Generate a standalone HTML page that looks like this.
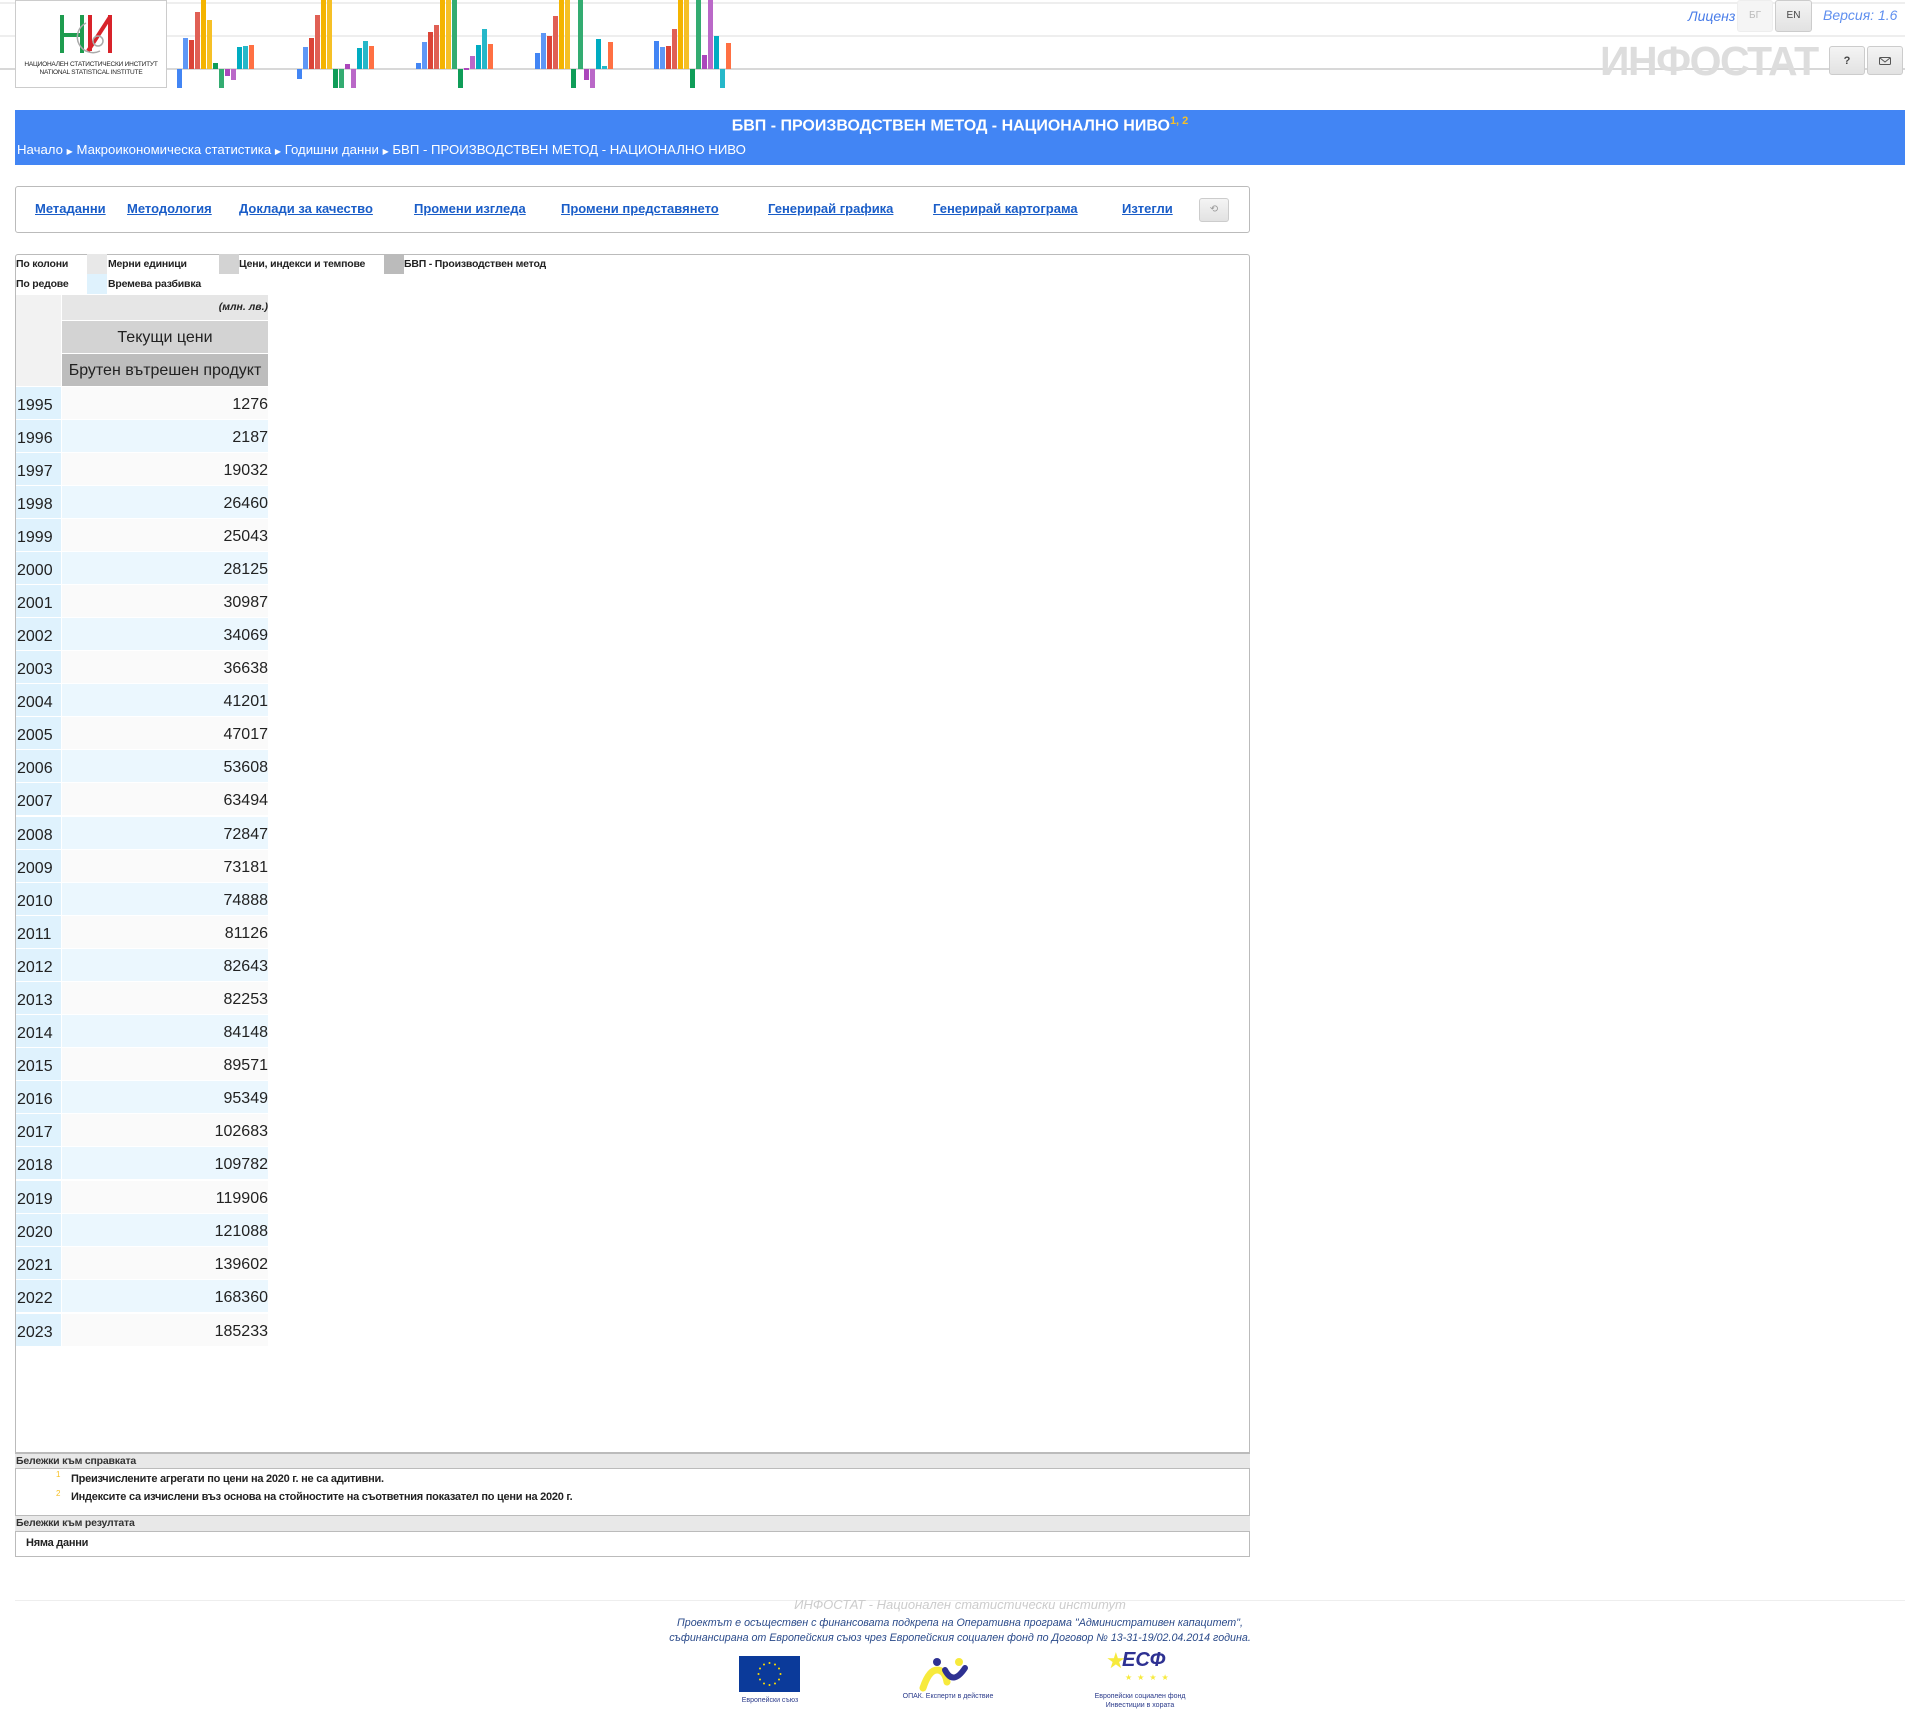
<!DOCTYPE html>
<html><head><meta charset="utf-8">
<style>
*{margin:0;padding:0;box-sizing:border-box}
body{width:1905px;height:1715px;position:relative;background:#fff;font-family:"Liberation Sans",sans-serif;overflow:hidden;color:#222}
.a{position:absolute}
.gl{position:absolute;left:0;width:1905px;height:2px;background:#eee}
.tb a{position:absolute;top:14px;color:#1a5dc8;font-weight:bold;font-size:13px;text-decoration:underline;white-space:nowrap}
.lg{position:absolute;font-size:10.5px;font-weight:bold;letter-spacing:-0.2px;white-space:nowrap}
.yr{position:absolute;left:16px;width:45px;height:32px;background:#dff2fd;font-size:16px;line-height:38px;padding-left:1px}
.dv{position:absolute;left:62px;width:206px;height:32px;font-size:16px;line-height:36px;text-align:right}
.btn{position:absolute;border:1px solid #ccc;border-radius:3px;background:linear-gradient(#f4f4f4,#e2e2e2);font-size:10px;color:#444;text-align:center}
.nt{position:absolute;font-size:11px;font-weight:bold;letter-spacing:-0.25px;white-space:nowrap}
</style></head><body>

<div class="gl" style="top:2px"></div>
<div class="gl" style="top:35px"></div>
<div class="a" style="left:0;top:68px;width:1905px;height:2px;background:#d8d8d8"></div>

<div class="a" style="left:15px;top:0;width:152px;height:88px;border:1px solid #ccc;background:#fff">
<svg class="a" style="left:44px;top:12px" width="60" height="45" viewBox="0 0 60 45">
<rect x="0" y="2" width="4" height="38" fill="#1e9c4f"/><rect x="0" y="20" width="22" height="4" fill="#1e9c4f"/><rect x="20" y="2" width="4" height="38" fill="#1e9c4f"/>
<path d="M28 38 L50 4" stroke="#d8232a" stroke-width="4"/><rect x="28" y="2" width="4" height="36" fill="#d8232a"/><rect x="48" y="2" width="4" height="38" fill="#d8232a"/>
<path d="M26 10 A14 14 0 1 0 40 38" fill="none" stroke="#aaa" stroke-width="1.5"/><circle cx="38" cy="28" r="5" fill="none" stroke="#aaa" stroke-width="1.5"/>
</svg>
<div class="a" style="left:0;top:60px;width:150px;text-align:center;font-size:6.5px;line-height:8px;color:#222;letter-spacing:-0.2px">НАЦИОНАЛЕН СТАТИСТИЧЕСКИ ИНСТИТУТ<br>NATIONAL STATISTICAL INSTITUTE</div>
</div>

<svg class="a" style="left:0;top:0" width="760" height="90">
<g>
<rect x="177" y="69" width="5" height="19" fill="#4285f4"/><rect x="183" y="38" width="5" height="31" fill="#5e97f6"/><rect x="189" y="40" width="5" height="29" fill="#db4437"/><rect x="195" y="12" width="5" height="57" fill="#e06055"/><rect x="201" y="0" width="5" height="69" fill="#f4b400"/><rect x="207" y="20" width="5" height="49" fill="#f6c026"/><rect x="213" y="63" width="5" height="6" fill="#0f9d58"/><rect x="219" y="69" width="5" height="19" fill="#33ac71"/><rect x="225" y="69" width="5" height="7" fill="#ab47bc"/><rect x="231" y="69" width="5" height="11" fill="#ba68c8"/><rect x="237" y="47" width="5" height="22" fill="#00acc1"/><rect x="243" y="46" width="5" height="23" fill="#26b8c9"/><rect x="249" y="45" width="5" height="24" fill="#ff7043"/>
</g><g>
<rect x="297" y="69" width="5" height="10" fill="#4285f4"/><rect x="303" y="47" width="5" height="22" fill="#5e97f6"/><rect x="309" y="38" width="5" height="31" fill="#db4437"/><rect x="315" y="15" width="5" height="54" fill="#e06055"/><rect x="321" y="0" width="5" height="69" fill="#f4b400"/><rect x="327" y="0" width="5" height="69" fill="#f6c026"/><rect x="333" y="69" width="5" height="19" fill="#0f9d58"/><rect x="339" y="69" width="5" height="19" fill="#33ac71"/><rect x="345" y="64" width="5" height="5" fill="#ab47bc"/><rect x="351" y="69" width="5" height="19" fill="#ba68c8"/><rect x="357" y="48" width="5" height="21" fill="#00acc1"/><rect x="363" y="41" width="5" height="28" fill="#26b8c9"/><rect x="369" y="46" width="5" height="23" fill="#ff7043"/>
</g><g>
<rect x="416" y="63" width="5" height="6" fill="#4285f4"/><rect x="422" y="42" width="5" height="27" fill="#5e97f6"/><rect x="428" y="32" width="5" height="37" fill="#db4437"/><rect x="434" y="25" width="5" height="44" fill="#e06055"/><rect x="440" y="0" width="5" height="69" fill="#f4b400"/><rect x="446" y="0" width="5" height="69" fill="#f6c026"/><rect x="452" y="0" width="5" height="69" fill="#33ac71"/><rect x="458" y="69" width="5" height="19" fill="#0f9d58"/><rect x="464" y="68" width="5" height="2" fill="#ab47bc"/><rect x="470" y="56" width="5" height="13" fill="#ba68c8"/><rect x="476" y="45" width="5" height="24" fill="#00acc1"/><rect x="482" y="29" width="5" height="40" fill="#26b8c9"/><rect x="488" y="44" width="5" height="25" fill="#ff7043"/>
</g><g>
<rect x="535" y="53" width="5" height="16" fill="#4285f4"/><rect x="541" y="33" width="5" height="36" fill="#5e97f6"/><rect x="547" y="36" width="5" height="33" fill="#db4437"/><rect x="553" y="16" width="5" height="53" fill="#e06055"/><rect x="559" y="0" width="5" height="69" fill="#f4b400"/><rect x="565" y="0" width="5" height="69" fill="#f6c026"/><rect x="571" y="69" width="5" height="19" fill="#0f9d58"/><rect x="578" y="0" width="5" height="69" fill="#33ac71"/><rect x="584" y="69" width="5" height="11" fill="#ab47bc"/><rect x="590" y="69" width="5" height="19" fill="#ba68c8"/><rect x="596" y="39" width="5" height="30" fill="#00acc1"/><rect x="602" y="66" width="5" height="3" fill="#26b8c9"/><rect x="608" y="42" width="5" height="27" fill="#ff7043"/>
</g><g>
<rect x="654" y="41" width="5" height="28" fill="#4285f4"/><rect x="660" y="47" width="5" height="22" fill="#5e97f6"/><rect x="666" y="46" width="5" height="23" fill="#db4437"/><rect x="672" y="29" width="5" height="40" fill="#e06055"/><rect x="678" y="0" width="5" height="69" fill="#f4b400"/><rect x="684" y="0" width="5" height="69" fill="#f6c026"/><rect x="690" y="69" width="5" height="19" fill="#0f9d58"/><rect x="696" y="0" width="5" height="69" fill="#33ac71"/><rect x="702" y="55" width="5" height="14" fill="#ab47bc"/><rect x="708" y="0" width="5" height="69" fill="#ba68c8"/><rect x="714" y="36" width="5" height="33" fill="#00acc1"/><rect x="720" y="69" width="5" height="19" fill="#26b8c9"/><rect x="726" y="43" width="5" height="26" fill="#ff7043"/>
</g>
</svg>

<div class="a" style="left:1688px;top:8px;font-size:14px;font-style:italic;color:#4a7de8">Лиценз</div>
<div class="btn" style="left:1737px;top:0;width:36px;height:32px;line-height:30px;color:#bbb;background:#f5f5f5;border-color:#eee">БГ</div>
<div class="btn" style="left:1775px;top:0;width:37px;height:32px;line-height:30px">EN</div>
<div class="a" style="left:1823px;top:7px;font-size:14px;font-style:italic;color:#5f8fef">Версия: 1.6</div>
<div class="a" style="left:1600px;top:38px;font-size:41px;font-weight:bold;color:#ddd;letter-spacing:-1.5px">ИНФОСТАТ</div>
<div class="btn" style="left:1829px;top:46px;width:36px;height:29px;line-height:28px;font-weight:bold;font-size:11px">?</div>
<div class="btn" style="left:1867px;top:46px;width:36px;height:29px">
<svg style="margin-top:9px" width="12" height="10" viewBox="0 0 12 10"><rect x="0.5" y="1.5" width="11" height="7" rx="1" fill="none" stroke="#555"/><path d="M1 2 L6 6 L11 2" fill="none" stroke="#555"/></svg></div>

<div class="a" style="left:15px;top:110px;width:1890px;height:55px;background:#4285f4;color:#fff">
<div class="a" style="left:0;top:5px;width:1890px;text-align:center;font-size:16px;font-weight:bold">БВП - ПРОИЗВОДСТВЕН МЕТОД - НАЦИОНАЛНО НИВО<sup style="color:#f6c026;font-size:11px">1, 2</sup></div>
<div class="a" style="left:2px;top:32px;font-size:13.2px;white-space:nowrap">Начало <span style="font-size:8px">▶</span> Макроикономическа статистика <span style="font-size:8px">▶</span> Годишни данни <span style="font-size:8px">▶</span> БВП - ПРОИЗВОДСТВЕН МЕТОД - НАЦИОНАЛНО НИВО</div>
</div>

<div class="a tb" style="left:15px;top:186px;width:1235px;height:47px;border:1px solid #bbb;border-radius:3px">
<a style="left:19px">Метаданни</a><a style="left:111px">Методология</a><a style="left:223px">Доклади за качество</a><a style="left:398px">Промени изгледа</a><a style="left:545px">Промени представянето</a><a style="left:752px">Генерирай графика</a><a style="left:917px">Генерирай картограма</a><a style="left:1106px">Изтегли</a>
<div class="btn" style="left:1183px;top:11px;width:30px;height:24px;line-height:22px;color:#999">⟲</div>
</div>

<div class="a" style="left:15px;top:254px;width:1235px;height:1199px;border:1px solid #bbb;border-radius:3px 3px 0 0"></div>
<div class="lg" style="left:16px;top:258px">По колони</div>
<div class="a" style="left:87px;top:254px;width:20px;height:20px;background:#e8e8e8"></div>
<div class="lg" style="left:108px;top:258px">Мерни единици</div>
<div class="a" style="left:219px;top:254px;width:20px;height:20px;background:#d3d3d3"></div>
<div class="lg" style="left:239px;top:258px">Цени, индекси и темпове</div>
<div class="a" style="left:384px;top:254px;width:20px;height:20px;background:#bbb"></div>
<div class="lg" style="left:404px;top:258px">БВП - Производствен метод</div>
<div class="lg" style="left:16px;top:278px">По редове</div>
<div class="a" style="left:87px;top:274px;width:20px;height:20px;background:#dff2fd"></div>
<div class="lg" style="left:108px;top:278px">Времева разбивка</div>

<div class="a" style="left:16px;top:295px;width:45px;height:91px;background:#f2f2f2"></div>
<div class="a" style="left:62px;top:295px;width:206px;height:25px;background:#e6e6e6;font-size:10.5px;font-weight:bold;font-style:italic;text-align:right;line-height:25px">(млн. лв.)</div>
<div class="a" style="left:62px;top:321px;width:206px;height:32px;background:#d3d3d3;font-size:16px;text-align:center;line-height:34px">Текущи цени</div>
<div class="a" style="left:62px;top:354px;width:206px;height:32px;background:#bdbdbd;font-size:16px;text-align:center;line-height:34px">Брутен вътрешен продукт</div>

<div class="yr" style="top:387px">1995</div><div class="dv" style="top:387px;background:#fafafa">1276</div>
<div class="yr" style="top:420px">1996</div><div class="dv" style="top:420px;background:#ebf7fe">2187</div>
<div class="yr" style="top:453px">1997</div><div class="dv" style="top:453px;background:#fafafa">19032</div>
<div class="yr" style="top:486px">1998</div><div class="dv" style="top:486px;background:#ebf7fe">26460</div>
<div class="yr" style="top:519px">1999</div><div class="dv" style="top:519px;background:#fafafa">25043</div>
<div class="yr" style="top:552px">2000</div><div class="dv" style="top:552px;background:#ebf7fe">28125</div>
<div class="yr" style="top:585px">2001</div><div class="dv" style="top:585px;background:#fafafa">30987</div>
<div class="yr" style="top:618px">2002</div><div class="dv" style="top:618px;background:#ebf7fe">34069</div>
<div class="yr" style="top:651px">2003</div><div class="dv" style="top:651px;background:#fafafa">36638</div>
<div class="yr" style="top:684px">2004</div><div class="dv" style="top:684px;background:#ebf7fe">41201</div>
<div class="yr" style="top:717px">2005</div><div class="dv" style="top:717px;background:#fafafa">47017</div>
<div class="yr" style="top:750px">2006</div><div class="dv" style="top:750px;background:#ebf7fe">53608</div>
<div class="yr" style="top:783px">2007</div><div class="dv" style="top:783px;background:#fafafa">63494</div>
<div class="yr" style="top:817px">2008</div><div class="dv" style="top:817px;background:#ebf7fe">72847</div>
<div class="yr" style="top:850px">2009</div><div class="dv" style="top:850px;background:#fafafa">73181</div>
<div class="yr" style="top:883px">2010</div><div class="dv" style="top:883px;background:#ebf7fe">74888</div>
<div class="yr" style="top:916px">2011</div><div class="dv" style="top:916px;background:#fafafa">81126</div>
<div class="yr" style="top:949px">2012</div><div class="dv" style="top:949px;background:#ebf7fe">82643</div>
<div class="yr" style="top:982px">2013</div><div class="dv" style="top:982px;background:#fafafa">82253</div>
<div class="yr" style="top:1015px">2014</div><div class="dv" style="top:1015px;background:#ebf7fe">84148</div>
<div class="yr" style="top:1048px">2015</div><div class="dv" style="top:1048px;background:#fafafa">89571</div>
<div class="yr" style="top:1081px">2016</div><div class="dv" style="top:1081px;background:#ebf7fe">95349</div>
<div class="yr" style="top:1114px">2017</div><div class="dv" style="top:1114px;background:#fafafa">102683</div>
<div class="yr" style="top:1147px">2018</div><div class="dv" style="top:1147px;background:#ebf7fe">109782</div>
<div class="yr" style="top:1181px">2019</div><div class="dv" style="top:1181px;background:#fafafa">119906</div>
<div class="yr" style="top:1214px">2020</div><div class="dv" style="top:1214px;background:#ebf7fe">121088</div>
<div class="yr" style="top:1247px">2021</div><div class="dv" style="top:1247px;background:#fafafa">139602</div>
<div class="yr" style="top:1280px">2022</div><div class="dv" style="top:1280px;background:#ebf7fe">168360</div>
<div class="yr" style="top:1314px">2023</div><div class="dv" style="top:1314px;background:#fafafa">185233</div>

<div class="a lg" style="left:15px;top:1453px;width:1235px;height:15px;background:#e8e8e8;border-top:1px solid #bbb;padding-left:1px;line-height:14px;color:#333">Бележки към справката</div>
<div class="a" style="left:15px;top:1468px;width:1235px;height:48px;border:1px solid #bbb"></div>
<div class="a" style="left:56px;top:1470px;font-size:8px;color:#f6c026">1</div>
<div class="nt" style="left:71px;top:1473px">Преизчислените агрегати по цени на 2020 г. не са адитивни.</div>
<div class="a" style="left:56px;top:1489px;font-size:8px;color:#f6c026">2</div>
<div class="nt" style="left:71px;top:1491px">Индексите са изчислени въз основа на стойностите на съответния показател по цени на 2020 г.</div>
<div class="a lg" style="left:15px;top:1516px;width:1235px;height:15px;background:#e8e8e8;padding-left:1px;line-height:15px;color:#333">Бележки към резултата</div>
<div class="a" style="left:15px;top:1531px;width:1235px;height:26px;border:1px solid #bbb"></div>
<div class="nt" style="left:26px;top:1537px">Няма данни</div>

<div class="a" style="left:15px;top:1600px;width:1890px;height:1px;background:#eee"></div>
<div class="a" style="left:0;top:1597px;width:1920px;text-align:center;font-size:13px;font-style:italic;color:#ccc">ИНФОСТАТ - Национален статистически институт</div>
<div class="a" style="left:0;top:1616px;width:1920px;text-align:center;font-size:10.7px;font-style:italic;color:#2a4a8a;line-height:15px">Проектът е осъществен с финансовата подкрепа на Оперативна програма "Административен капацитет",<br>съфинансирана от Европейския съюз чрез Европейския социален фонд по Договор № 13-31-19/02.04.2014 година.</div>
<div class="a" style="left:739px;top:1656px;width:61px;height:36px;background:#0b3a9a">
<svg width="61" height="36"><g fill="#ffdd00"><circle cx="30.5" cy="7" r="1"/><circle cx="36" cy="8.5" r="1"/><circle cx="40" cy="12.5" r="1"/><circle cx="41.5" cy="18" r="1"/><circle cx="40" cy="23.5" r="1"/><circle cx="36" cy="27.5" r="1"/><circle cx="30.5" cy="29" r="1"/><circle cx="25" cy="27.5" r="1"/><circle cx="21" cy="23.5" r="1"/><circle cx="19.5" cy="18" r="1"/><circle cx="21" cy="12.5" r="1"/><circle cx="25" cy="8.5" r="1"/></g></svg></div>
<div class="a" style="left:730px;top:1697px;width:80px;text-align:center;font-size:7px;color:#2a3a8a">Европейски съюз</div>
<svg class="a" style="left:915px;top:1656px" width="70" height="36"><circle cx="22" cy="6" r="4" fill="#2e3192"/><path d="M8 32 Q14 14 22 14 Q30 14 32 26" fill="none" stroke="#f7ea3c" stroke-width="7" stroke-linecap="round"/><path d="M30 14 Q38 30 50 12" fill="none" stroke="#2e3192" stroke-width="6" stroke-linecap="round"/><circle cx="44" cy="6" r="4" fill="#f7ea3c"/></svg>
<div class="a" style="left:898px;top:1693px;width:100px;text-align:center;font-size:7px;color:#2a3a8a">ОПАК. Експерти в действие</div>
<div class="a" style="left:1106px;top:1648px;font-size:22px;color:#f7ea3c">★</div>
<div class="a" style="left:1122px;top:1649px;font-size:20px;font-weight:bold;font-style:italic;color:#2e3192">ЕСФ</div>
<div class="a" style="left:1125px;top:1673px;font-size:8px;color:#f7ea3c;letter-spacing:5px">★★★★</div>
<div class="a" style="left:1090px;top:1692px;width:100px;text-align:center;font-size:7px;line-height:9px;color:#2a3a8a">Европейски социален фонд<br>Инвестиции в хората</div>
</body></html>
